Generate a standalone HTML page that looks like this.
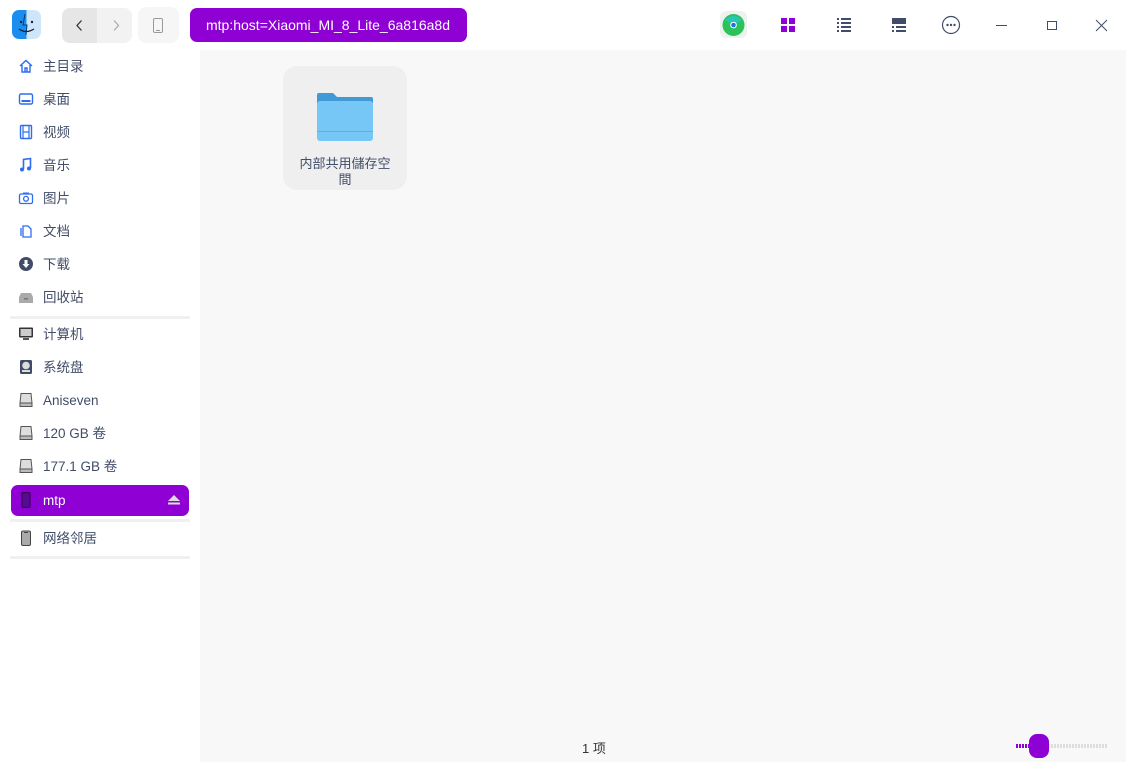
<!DOCTYPE html><html><head><meta charset="utf-8"><style>
*{margin:0;padding:0;box-sizing:border-box}
body{width:1126px;height:762px;overflow:hidden;background:#f8f8f8;font-family:"Liberation Sans","Noto Sans CJK SC",sans-serif;position:relative;color:#414d68}
.top{position:absolute;left:0;top:0;width:1126px;height:50px;background:#fff}
.side{position:absolute;left:0;top:50px;width:200px;height:712px;background:#fff}
.it{position:absolute;left:0;width:200px;height:30px;font-size:13.5px;line-height:31px}
.it span{position:absolute;left:43px}
.it svg{position:absolute;left:18px;top:7px}
.sep{position:absolute;left:10px;width:180px;height:3px;background:#f0f0f0}
.ab{position:absolute}
</style></head><body>
<div class="top"></div>
<div class="ab" style="left:12px;top:10px;width:29px;height:29px;border-radius:7px;background:linear-gradient(90deg,#1a8ef0 50%,#cfe6fa 50%);overflow:hidden">
<svg width="29" height="29"><path d="M13 4 L11 15 L15 15 L14 25" stroke="#0a3a6a" fill="none" stroke-width="1"/><circle cx="9" cy="12" r="1.2" fill="#123"/><circle cx="20" cy="12" r="1.2" fill="#123"/><path d="M7 19 Q14 24 22 19" stroke="#123" fill="none" stroke-width="1.3"/></svg></div>
<div class="ab" style="left:62px;top:8px;width:70px;height:35px;border-radius:8px;background:#f2f2f2;overflow:hidden"><div style="width:35px;height:35px;background:#e6e6e6"></div>
<svg class="ab" style="left:0;top:0" width="70" height="35"><path d="M19.5 12.5 L15 17.5 L19.5 22.5" stroke="#333" fill="none" stroke-width="1.3"/><path d="M52 12.5 L56.5 17.5 L52 22.5" stroke="#aaa" fill="none" stroke-width="1.2"/></svg></div>
<div class="ab" style="left:138px;top:7px;width:41px;height:36px;border-radius:8px;background:#f6f6f6"><svg width="41" height="36"><rect x="15.5" y="11.5" width="9" height="14" rx="1.5" stroke="#999" fill="none"/><line x1="18" y1="23.5" x2="22" y2="23.5" stroke="#999"/></svg></div>
<div class="ab" style="left:190px;top:8px;width:277px;height:34px;border-radius:7px;background:#8e00d4;color:#fff;font-size:14px;line-height:34px;padding-left:16px">mtp:host=Xiaomi_MI_8_Lite_6a816a8d</div>
<div class="ab" style="left:720px;top:11px;width:27px;height:27px;border-radius:6px;background:#eef2ee"><svg width="27" height="27"><circle cx="13.5" cy="14" r="11" fill="#2bc25a"/><path d="M5 9 A11 11 0 0 1 22 9 L13.5 14Z" fill="#27c6b5"/><circle cx="13.5" cy="14" r="3.3" fill="#fff"/><circle cx="13.5" cy="14" r="2.3" fill="#1f6fe8"/></svg></div>
<svg class="ab" style="left:780px;top:17px" width="16" height="16"><rect x="1" y="1" width="6" height="6" fill="#8e00d4"/><rect x="9" y="1" width="6" height="6" fill="#8e00d4"/><rect x="1" y="9" width="6" height="6" fill="#8e00d4"/><rect x="9" y="9" width="6" height="6" fill="#8e00d4"/></svg>
<svg class="ab" style="left:836px;top:17px" width="16" height="16" fill="#414d68"><rect x="1" y="1" width="2" height="2"/><rect x="5" y="1" width="10" height="2"/><rect x="1" y="5" width="2" height="2"/><rect x="5" y="5" width="10" height="2"/><rect x="1" y="9" width="2" height="2"/><rect x="5" y="9" width="10" height="2"/><rect x="1" y="13" width="2" height="2"/><rect x="5" y="13" width="10" height="2"/></svg>
<svg class="ab" style="left:891px;top:17px" width="16" height="16" fill="#414d68"><rect x="1" y="1" width="14" height="6"/><rect x="1" y="9" width="2" height="2"/><rect x="5" y="9" width="10" height="2"/><rect x="1" y="13" width="2" height="2"/><rect x="5" y="13" width="10" height="2"/></svg>
<svg class="ab" style="left:941px;top:15px" width="20" height="20"><circle cx="10" cy="10" r="8.5" stroke="#414d68" fill="none" stroke-width="1.2"/><circle cx="6.5" cy="10" r="1.2" fill="#414d68"/><circle cx="10" cy="10" r="1.2" fill="#414d68"/><circle cx="13.5" cy="10" r="1.2" fill="#414d68"/></svg>
<svg class="ab" style="left:996px;top:20px" width="12" height="10"><line x1="0" y1="5.5" x2="11" y2="5.5" stroke="#414d68"/></svg>
<svg class="ab" style="left:1046px;top:20px" width="12" height="12"><rect x="1.5" y="1.5" width="9" height="8" stroke="#414d68" fill="none"/></svg>
<svg class="ab" style="left:1095px;top:19px" width="13" height="13"><path d="M1 1 L12 12 M12 1 L1 12" stroke="#414d68"/></svg>
<div class="side">
<div class="it" style="top:1px"><svg width="16" height="16"><path d="M2 8 L8 2.5 L14 8 M4 7 V14 H12 V7 M7 14 V10 H9 V14" stroke="#2e6cf0" fill="none" stroke-width="1.4"/></svg><span>主目录</span></div>
<div class="it" style="top:34px"><svg width="16" height="16"><rect x="1.5" y="3" width="13" height="10" rx="1.5" stroke="#2e6cf0" fill="none" stroke-width="1.4"/><rect x="3.5" y="9" width="9" height="2" fill="#2e6cf0"/></svg><span>桌面</span></div>
<div class="it" style="top:67px"><svg width="16" height="16"><rect x="2.5" y="1.5" width="11" height="13" rx="1" stroke="#2e6cf0" fill="none" stroke-width="1.4"/><path d="M5 2V14 M11 2V14 M5 8H11" stroke="#2e6cf0" stroke-width="1.2"/></svg><span>视频</span></div>
<div class="it" style="top:100px"><svg width="16" height="16"><path d="M5.5 12V2.5 L12.5 1.5 V11" stroke="#2e6cf0" fill="none" stroke-width="1.6"/><circle cx="4" cy="12.5" r="2" fill="#2e6cf0"/><circle cx="11" cy="11.5" r="2" fill="#2e6cf0"/></svg><span>音乐</span></div>
<div class="it" style="top:133px"><svg width="16" height="16"><rect x="1.5" y="4" width="13" height="9.5" rx="1.5" stroke="#2e6cf0" fill="none" stroke-width="1.3"/><circle cx="8" cy="8.8" r="2.4" stroke="#2e6cf0" fill="none" stroke-width="1.3"/><rect x="5" y="2.5" width="6" height="2" fill="#2e6cf0"/></svg><span>图片</span></div>
<div class="it" style="top:166px"><svg width="16" height="16"><path d="M5 3 H10 L13 6 V14 H5Z M3 5 V13" stroke="#2e6cf0" fill="none" stroke-width="1.3"/></svg><span>文档</span></div>
<div class="it" style="top:199px"><svg width="16" height="16"><circle cx="8" cy="8" r="7" fill="#414d68"/><path d="M6.5 4H9.5V8H11.5L8 12L4.5 8H6.5Z" fill="#fff"/></svg><span>下载</span></div>
<div class="it" style="top:232px"><svg width="16" height="16"><path d="M1 8 L3 4 H13 L15 8 V14 H1Z" fill="#aaa"/><rect x="6" y="9" width="4" height="1.5" fill="#777"/></svg><span>回收站</span></div>
<div class="sep" style="top:266px"></div>
<div class="it" style="top:269px"><svg width="16" height="16"><rect x="1" y="1.5" width="14" height="10" rx="1" fill="#333"/><rect x="2.5" y="3" width="11" height="7" fill="#ccc"/><rect x="5" y="12" width="6" height="2" fill="#555"/></svg><span>计算机</span></div>
<div class="it" style="top:302px"><svg width="16" height="16"><rect x="2" y="1" width="12" height="14" rx="1.5" fill="#414d68"/><circle cx="8" cy="6.5" r="3.8" fill="#ddd"/><rect x="4" y="11" width="8" height="2" fill="#ddd"/></svg><span>系统盘</span></div>
<div class="it" style="top:335px"><svg width="16" height="16"><path d="M3 1.5 H13 L14 11 H2Z" fill="#ddd" stroke="#555"/><rect x="2" y="11" width="12" height="3.5" fill="#bbb" stroke="#555"/></svg><span>Aniseven</span></div>
<div class="it" style="top:368px"><svg width="16" height="16"><path d="M3 1.5 H13 L14 11 H2Z" fill="#ddd" stroke="#555"/><rect x="2" y="11" width="12" height="3.5" fill="#bbb" stroke="#555"/></svg><span>120 GB 卷</span></div>
<div class="it" style="top:401px"><svg width="16" height="16"><path d="M3 1.5 H13 L14 11 H2Z" fill="#ddd" stroke="#555"/><rect x="2" y="11" width="12" height="3.5" fill="#bbb" stroke="#555"/></svg><span>177.1 GB 卷</span></div>
<div class="ab" style="left:11px;top:435px;width:178px;height:31px;border-radius:7px;background:#8e00d4"></div>
<div class="it" style="top:435px;color:#fff"><svg width="16" height="16"><rect x="4" y="0.5" width="8" height="15" rx="1" fill="#5a0a90" stroke="#300050"/></svg><span>mtp</span><svg style="left:167px;top:9px" width="14" height="12"><path d="M7 1 L13 7 H1Z" fill="#ddd"/><rect x="1" y="8.5" width="12" height="2" fill="#ddd"/></svg></div>
<div class="sep" style="top:469px"></div>
<div class="it" style="top:473px"><svg width="16" height="16"><rect x="3.5" y="1" width="9" height="14.5" rx="1.5" fill="#aaa" stroke="#444"/><line x1="6" y1="2.5" x2="10" y2="2.5" stroke="#444"/></svg><span>网络邻居</span></div>
<div class="sep" style="top:506px"></div>
</div>
<div class="ab" style="left:283px;top:66px;width:124px;height:124px;border-radius:14px;background:#efefef"></div>
<svg class="ab" style="left:315px;top:92px" width="60" height="52"><path d="M2 3 Q2 1 4 1 H18 L22 5 H56 Q58 5 58 7 V12 H2Z" fill="#3f9ad6"/><rect x="2" y="9" width="56" height="40" rx="3" fill="#76c7f6"/><rect x="2" y="39" width="56" height="1" fill="#5db1e6"/></svg>
<div class="ab" style="left:283px;top:156px;width:124px;text-align:center;font-size:13px;line-height:16px;color:#414d68">内部共用儲存空<br>間</div>
<div class="ab" style="left:582px;top:738px;font-size:13px;color:#333">1 项</div>
<div class="ab" style="left:1016px;top:744px;width:22px;height:4px;background:repeating-linear-gradient(90deg,#8e00d4 0 2px,transparent 2px 3px)"></div>
<div class="ab" style="left:1048px;top:744px;width:60px;height:4px;background:repeating-linear-gradient(90deg,#ddd 0 2px,transparent 2px 3px)"></div>
<div class="ab" style="left:1029px;top:734px;width:20px;height:24px;border-radius:8px;background:#8e00d4"></div>
</body></html>
